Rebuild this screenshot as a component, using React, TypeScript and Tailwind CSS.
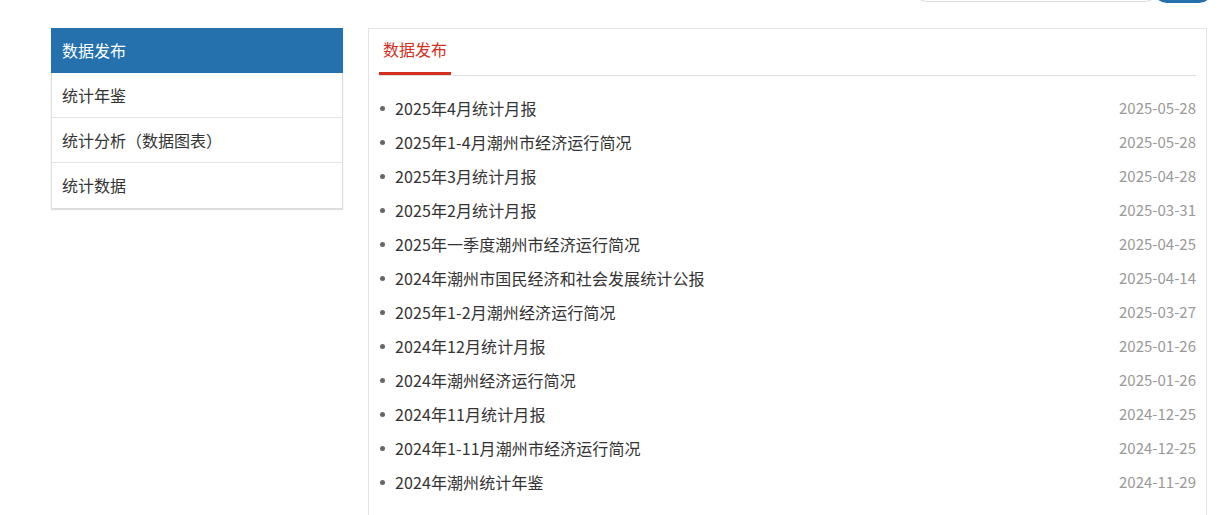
import React from "react";

const items: [string, string][] = [
  ["2025年4月统计月报", "2025-05-28"],
  ["2025年1-4月潮州市经济运行简况", "2025-05-28"],
  ["2025年3月统计月报", "2025-04-28"],
  ["2025年2月统计月报", "2025-03-31"],
  ["2025年一季度潮州市经济运行简况", "2025-04-25"],
  ["2024年潮州市国民经济和社会发展统计公报", "2025-04-14"],
  ["2025年1-2月潮州经济运行简况", "2025-03-27"],
  ["2024年12月统计月报", "2025-01-26"],
  ["2024年潮州经济运行简况", "2025-01-26"],
  ["2024年11月统计月报", "2024-12-25"],
  ["2024年1-11月潮州市经济运行简况", "2024-12-25"],
  ["2024年潮州统计年鉴", "2024-11-29"],
];

const side = ["统计年鉴", "统计分析（数据图表）", "统计数据"];

export default function App() {
  return (
    <div
      className="w-[1231px] h-[515px] overflow-hidden bg-white text-[#333]"
      style={{ fontFamily: '"Noto Sans CJK SC", "Noto Sans", sans-serif' }}
    >
      <div className="h-[28px] flex justify-end pr-[18px]">
        <div className="flex">
          <div className="w-[250px] h-[34px] -mt-[32px] border border-[#ddd] rounded-full bg-white" />
          <div className="w-[60px] h-[36px] -mt-[33px] -ml-[8px] rounded-[14px] bg-[#2471ae]" />
        </div>
      </div>
      <div className="ml-[51px] w-[1156px] flex items-start gap-[25px]">
        <div className="w-[292px] border border-[#ddd] shadow-[0_1px_1px_rgba(0,0,0,0.12)]">
          <div className="h-[45px] -mt-px -mx-px bg-[#2471ae] text-white text-[16px] flex items-center pl-[11px] pb-[2px]">
            数据发布
          </div>
          {side.map((s, i) => (
            <div
              key={s}
              className={`h-[45px] flex items-center pl-[10px] pb-[1px] text-[16px] text-[#333] ${
                i < side.length - 1 ? "border-b border-[#e3e3e3]" : ""
              }`}
            >
              {s}
            </div>
          ))}
        </div>
        <div className="flex-1 h-[520px] border border-[#e3e3e3] px-[10px]">
          <div className="border-b border-[#e0e0e0] flex">
            <div className="pt-[8px] pb-[11px] px-[4px] text-[16px] leading-[24px] text-[#d4301e] border-b-[3px] border-[#d4301e]">
              数据发布
            </div>
          </div>
          <ul className="pt-[15px]">
            {items.map(([t, d]) => (
              <li key={t} className="h-[34px] flex items-center">
                <span className="w-[5px] h-[5px] rounded-full bg-[#666] ml-[1px] mr-[10px]" />
                <span className="flex-1 text-[16px] text-[#333] tracking-[0.1px]">{t}</span>
                <span className="text-[15px] text-[#999]">{d}</span>
              </li>
            ))}
          </ul>
        </div>
      </div>
    </div>
  );
}
